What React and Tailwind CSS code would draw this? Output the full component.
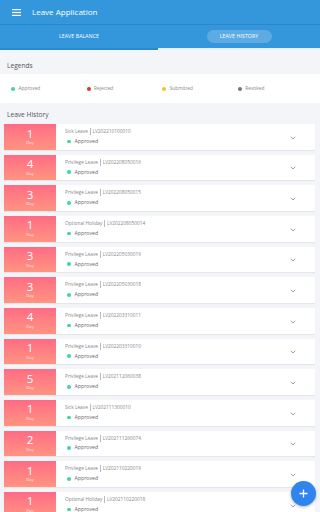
import React from "react";

const items = [
  [1, "Sick Leave", "LV202210100010"],
  [4, "Privilege Leave", "LV202208050016"],
  [3, "Privilege Leave", "LV202208050015"],
  [1, "Optional Holiday", "LV202208050014"],
  [3, "Privilege Leave", "LV202205030019"],
  [3, "Privilege Leave", "LV202205030018"],
  [4, "Privilege Leave", "LV202203310011"],
  [1, "Privilege Leave", "LV202203310010"],
  [5, "Privilege Leave", "LV202112060038"],
  [1, "Sick Leave", "LV202111300010"],
  [2, "Privilege Leave", "LV202111260074"],
  [1, "Privilege Leave", "LV202110220019"],
  [1, "Optional Holiday", "LV202110220018"],
];

const legends = [
  ["Approved", "bg-[#3dd6a6]"],
  ["Rejected", "bg-[#e8322b]"],
  ["Submitted", "bg-[#f7c21b]"],
  ["Revoked", "bg-[#777777]"],
];

export default function App() {
  return (
    <div
      className="relative w-[320px] h-[512px] overflow-hidden bg-[#f4f5f9]"
      style={{ fontFamily: '"Open Sans", "Noto Sans", sans-serif' }}
    >
      <div className="h-[25px] bg-[#3597db] flex items-center border-b border-[#2d87c6]">
        <div className="w-[32px] flex justify-center pl-[1px]">
          <svg width="9" height="7" viewBox="0 0 9 7">
            <rect x="0" y="0" width="9" height="1.2" fill="white" />
            <rect x="0" y="2.9" width="9" height="1.2" fill="white" />
            <rect x="0" y="5.8" width="9" height="1.2" fill="white" />
          </svg>
        </div>
        <span className="text-white text-[8px] leading-none">Leave Application</span>
      </div>
      <div className="h-[25px] bg-[#3597db] flex flex-col">
        <div className="flex-1 flex">
          <div className="w-[158px] flex items-center justify-center text-white text-[5.2px] tracking-[0.1px]">
            LEAVE BALANCE
          </div>
          <div className="flex-1 flex items-center justify-center">
            <div className="w-[65px] h-[13px] rounded-full bg-white/20 flex items-center justify-center text-white text-[5.2px] tracking-[0.1px]">
              LEAVE HISTORY
            </div>
          </div>
        </div>
        <div className="h-[2px] flex">
          <div className="w-[158px] bg-[#2a89cf]" />
          <div className="flex-1 bg-[#e8f2fb]" />
        </div>
      </div>
      <div className="h-[24px] flex items-center px-[7px] text-[6.6px] text-[#555] pt-[7px]">Legends</div>
      <div className="h-[29px] bg-white flex items-center">
        {legends.map(([label, c], i) => (
          <div key={label} className="w-[75.6px] flex items-center pl-[11px]">
            <span className={`w-[4px] h-[4px] rounded-full ${c}`} />
            <span className="ml-[3.5px] text-[4.8px] text-[#888]">{label}</span>
          </div>
        ))}
      </div>
      <div className="h-[21px] flex items-center px-[7px] text-[6.6px] text-[#555] pt-[2px]">Leave History</div>
      <div className="flex flex-col gap-[5px] px-[4px] pr-[5px]">
        {items.map(([n, type, id], i) => (
          <div key={i} className="h-[25.67px] shrink-0 bg-white flex shadow-[0_1px_1px_rgba(0,0,0,0.06)]">
            <div className="w-[52px] bg-gradient-to-b from-[#ff6b84] to-[#ff9481] flex flex-col items-center text-white">
              <span className="text-[11.5px] leading-none mt-[3.5px]">{n}</span>
              <span className="text-[4.2px] leading-none mt-[2px] opacity-90">Day</span>
            </div>
            <div className="flex-1 flex flex-col pl-[9px] pt-[4px]">
              <div className="flex items-center text-[4.8px] text-[#888] leading-none h-[7px]">
                <span>{type}</span>
                <span className="mx-[2px] w-[0.6px] h-[7px] bg-[#bbb]" />
                <span>{id}</span>
              </div>
              <div className="flex items-center mt-[4px] h-[5px]">
                <span className="ml-[2px] w-[3.6px] h-[3.6px] rounded-full bg-[#3dd6a6]" />
                <span className="ml-[4px] text-[5.2px] text-[#666] leading-none">Approved</span>
              </div>
            </div>
            <div className="w-[30px] flex items-center justify-start pl-[5px] pt-[2px]">
              <svg width="6" height="4" viewBox="0 0 6 4">
                <path d="M0.8 0.8 L3 3 L5.2 0.8" stroke="#888" strokeWidth="0.8" fill="none" />
              </svg>
            </div>
          </div>
        ))}
      </div>
      <div className="absolute left-[290.5px] top-[481px] w-[25px] h-[25px] rounded-full bg-[#2f84ee] shadow-[0_1px_3px_rgba(0,0,0,0.3)] flex items-center justify-center">
        <svg width="9" height="9" viewBox="0 0 9 9">
          <path d="M4.5 0.5 V8.5 M0.5 4.5 H8.5" stroke="white" strokeWidth="1.3" />
        </svg>
      </div>
    </div>
  );
}
